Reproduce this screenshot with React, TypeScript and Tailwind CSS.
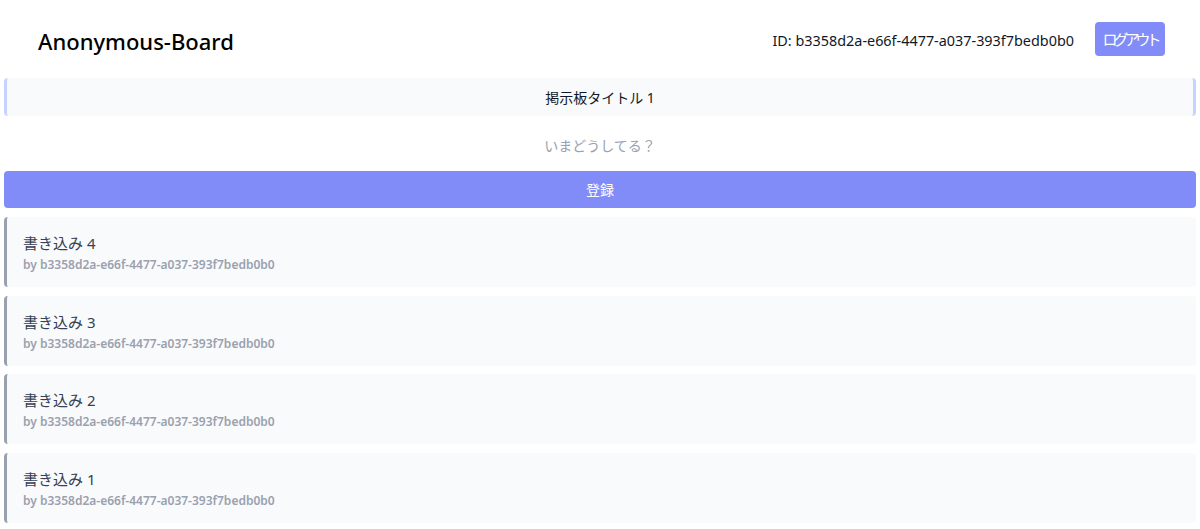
const USER_ID = "b3358d2a-e66f-4477-a037-393f7bedb0b0";

const posts = [
  { id: 4, body: "書き込み 4" },
  { id: 3, body: "書き込み 3" },
  { id: 2, body: "書き込み 2" },
  { id: 1, body: "書き込み 1" },
];

function Header() {
  return (
    <header className="flex h-[78px] items-center justify-between pl-[38px] pr-[35px]">
      <h1 className="pt-[4px] text-[22px] font-medium text-black">Anonymous-Board</h1>
      <div className="flex items-center gap-[21px]">
        <span className="pt-[3px] text-[14.4px] text-gray-900">ID: {USER_ID}</span>
        <button className="h-[34px] w-[70px] whitespace-nowrap rounded bg-[#818cf8] text-[15px] tracking-[-4px] text-white">
          ログアウト
        </button>
      </div>
    </header>
  );
}

export default function App() {
  return (
    <div
      className="min-h-screen bg-white"
      style={{ fontFamily: '"Noto Sans", "Noto Sans CJK JP", sans-serif' }}
    >
      <Header />
      <main className="flex flex-col px-1">
        {/* board title */}
        <div className="flex h-[38px] items-center justify-center rounded border-x-[3px] border-[#c7d2fe] bg-gray-50 text-[14px] text-gray-900">
          掲示板タイトル 1
        </div>

        {/* new post form */}
        <form className="flex flex-col" onSubmit={(e) => e.preventDefault()}>
          <input
            placeholder="いまどうしてる？"
            className="h-[55px] w-full bg-white pt-[4px] text-center text-[14px] outline-none placeholder:text-gray-400"
          />
          <button className="h-[37px] w-full rounded bg-[#818cf8] text-[14px] text-white">
            登録
          </button>
        </form>

        {/* posts */}
        <ul className="mt-[9px] flex flex-col gap-[8.5px]">
          {posts.map((p) => (
            <li
              key={p.id}
              className="flex h-[70px] flex-col justify-center rounded border-l-[3px] border-gray-400 bg-gray-50 pl-4"
            >
              <p className="text-[15px] leading-[26px] text-gray-700">{p.body}</p>
              <p className="text-[12px] font-semibold leading-[18px] text-gray-400">
                by {USER_ID}
              </p>
            </li>
          ))}
        </ul>
      </main>
    </div>
  );
}
